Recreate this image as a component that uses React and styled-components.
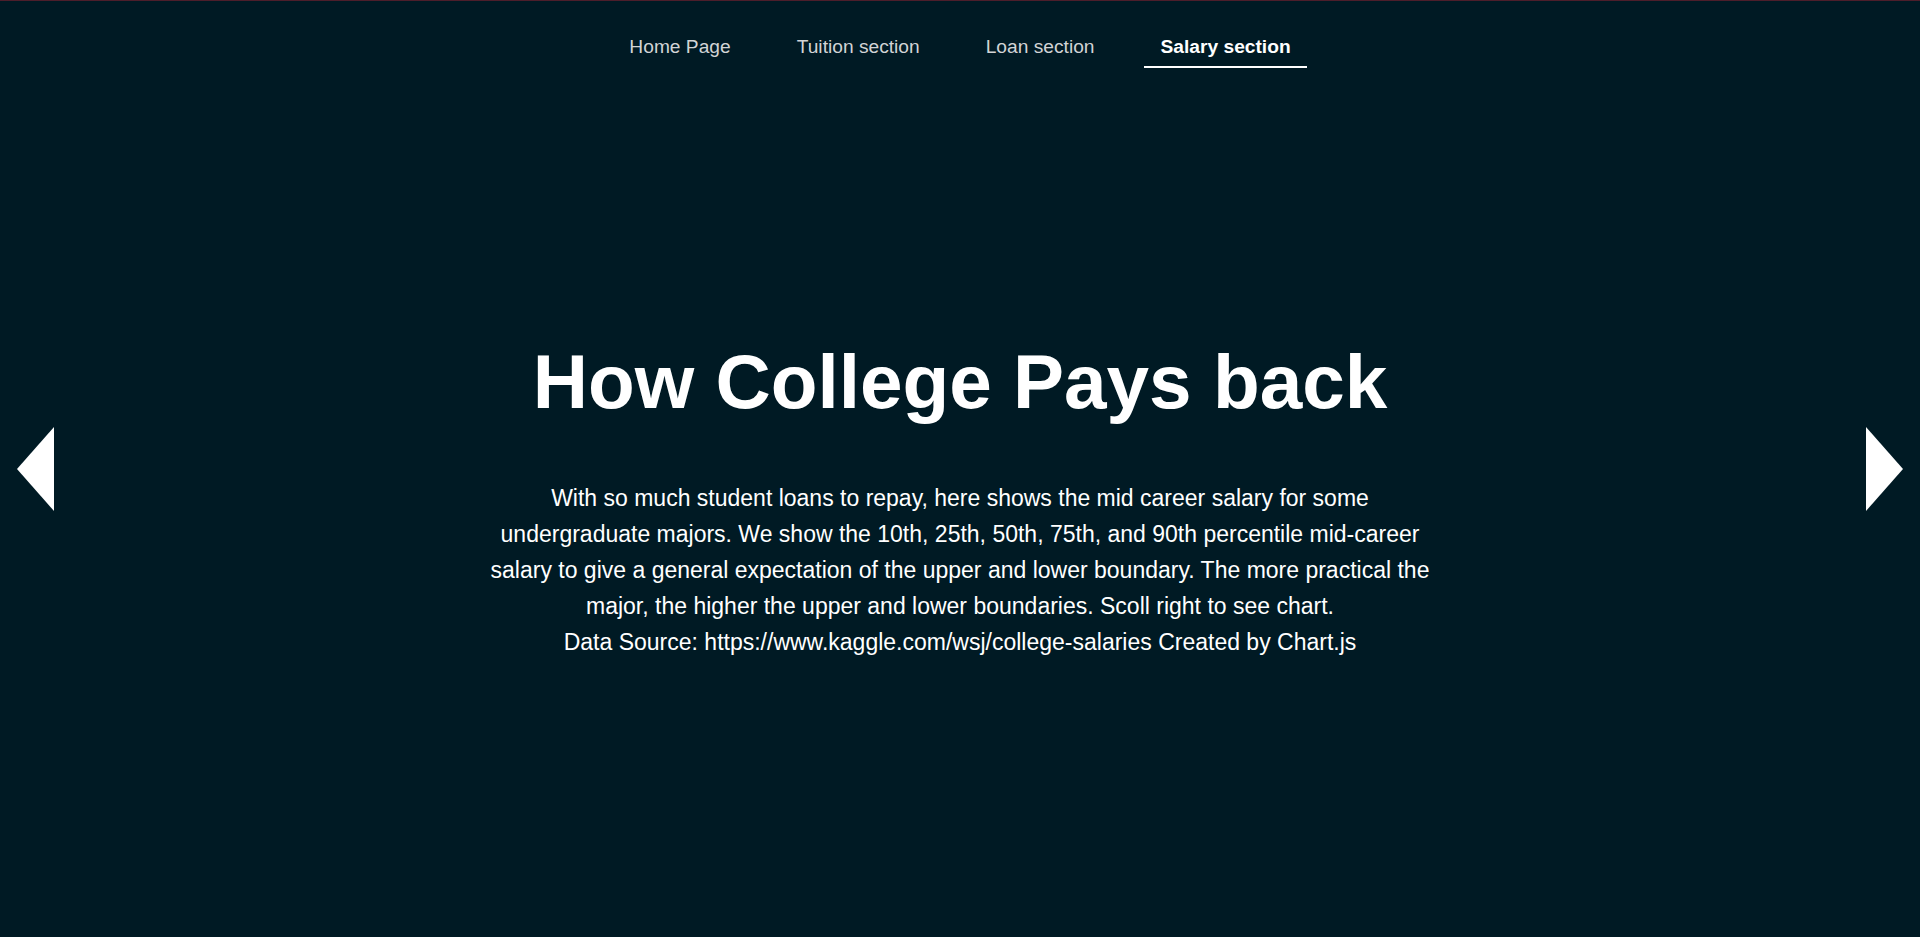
import React from "react";
import styled, { createGlobalStyle } from "styled-components";

const GlobalStyle = createGlobalStyle`
  html, body {
    margin: 0;
    padding: 0;
    background: #001a24;
  }
  body {
    font-family: "Liberation Sans", Arial, sans-serif;
  }
`;

const NAV_ITEMS = ["Home Page", "Tuition section", "Loan section", "Salary section"];

function App() {
  const active = "Salary section";

  return (
    <Page>
      <GlobalStyle />
      <Nav>
        {NAV_ITEMS.map((item) => (
          <NavLink key={item} $active={item === active}>
            {item}
          </NavLink>
        ))}
      </Nav>
      <Slide>
        <Title>How College Pays back</Title>
        <Intro>
          With so much student loans to repay, here shows the mid career salary for some
          undergraduate majors. We show the 10th, 25th, 50th, 75th, and 90th percentile
          mid-career salary to give a general expectation of the upper and lower boundary.
          The more practical the major, the higher the upper and lower boundaries. Scoll
          right to see chart.
          <br />
          Data Source: https://www.kaggle.com/wsj/college-salaries Created by Chart.js
        </Intro>
      </Slide>
      <Arrow $side="left" aria-label="previous" />
      <Arrow $side="right" aria-label="next" />
    </Page>
  );
}

const Page = styled.div`
  position: relative;
  box-sizing: border-box;
  min-height: 100vh;
  border-top: 1px solid #4d1e2b;
  background: #001a24;
  color: #ffffff;
  overflow: hidden;
`;

const Nav = styled.nav`
  display: flex;
  justify-content: center;
  gap: 33px;
  padding-top: 27px;
`;

const NavLink = styled.a`
  display: block;
  padding: 8px 16.5px 8px;
  font-size: 19.2px;
  line-height: 22px;
  font-weight: ${(p) => (p.$active ? 700 : 400)};
  color: ${(p) => (p.$active ? "#ffffff" : "#d2d4d6")};
  border-bottom: 2px solid ${(p) => (p.$active ? "#ffffff" : "transparent")};
  cursor: pointer;
  white-space: nowrap;
`;

const Slide = styled.section`
  display: flex;
  flex-direction: column;
  align-items: center;
  padding-top: 275px;
`;

const Title = styled.h1`
  margin: 0;
  font-size: 76.5px;
  line-height: 77px;
  font-weight: 700;
  color: #ffffff;
`;

const Intro = styled.p`
  margin: 60px 0 0;
  max-width: 960px;
  font-size: 23px;
  line-height: 36px;
  text-align: center;
  color: #ffffff;
`;

const Arrow = styled.button`
  position: absolute;
  top: 50%;
  ${(p) => (p.$side === "left" ? "left: 17px;" : "right: 17px;")}
  transform: translateY(-50%);
  width: 0;
  height: 0;
  padding: 0;
  background: none;
  cursor: pointer;
  border-style: solid;
  border-color: transparent;
  border-width: 42px 0;
  ${(p) => (p.$side === "left"
    ? "border-right: 37px solid #ffffff;"
    : "border-left: 37px solid #ffffff;")}
`;

export default App;
